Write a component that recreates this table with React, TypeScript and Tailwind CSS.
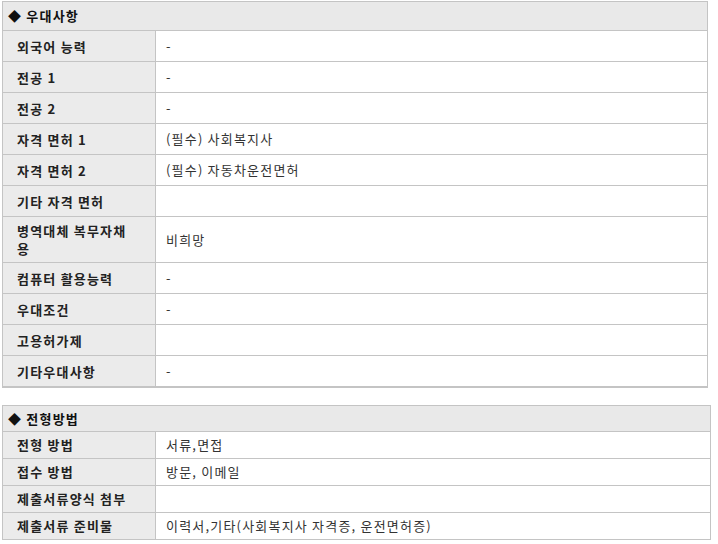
const FONT = "font-['Malgun_Gothic','Noto_Sans_CJK_KR',sans-serif]";

type Row = { label: string; value: string };

const PREFER: Row[] = [
  { label: "외국어 능력", value: "-" },
  { label: "전공 1", value: "-" },
  { label: "전공 2", value: "-" },
  { label: "자격 면허 1", value: "(필수) 사회복지사" },
  { label: "자격 면허 2", value: "(필수) 자동차운전면허" },
  { label: "기타 자격 면허", value: "" },
  { label: "병역대체 복무자채용", value: "비희망" },
  { label: "컴퓨터 활용능력", value: "-" },
  { label: "우대조건", value: "-" },
  { label: "고용허가제", value: "" },
  { label: "기타우대사항", value: "-" },
];

const SELECTION: Row[] = [
  { label: "전형 방법", value: "서류,면접" },
  { label: "접수 방법", value: "방문, 이메일" },
  { label: "제출서류양식 첨부", value: "" },
  { label: "제출서류 준비물", value: "이력서,기타(사회복지사 자격증, 운전면허증)" },
];

function InfoTable({
  title,
  rows,
  rowH,
  headH,
  pad,
  width,
  thickBottom,
}: {
  title: string;
  rows: Row[];
  rowH: string;
  headH: string;
  pad: string;
  width: string;
  thickBottom?: boolean;
}) {
  return (
    <div
      className={`${width} border border-[#c4c4c4] ${thickBottom ? "border-b-2" : ""} bg-white`}
    >
      <div
        className={`${headH} flex items-center pl-[5px] bg-[#e9e9e9] border-b border-[#c4c4c4] text-[13px] tracking-[1.2px] font-bold text-[#111]`}
      >
        ◆ {title}
      </div>
      {rows.map((r, i) => (
        <div
          key={r.label}
          className={`flex ${i < rows.length - 1 ? "border-b border-[#c4c4c4]" : ""}`}
        >
          <div
            className={`w-[153px] shrink-0 ${rowH} ${pad} flex items-center pl-[14px] pr-[20px] bg-[#ebebeb] border-r border-[#c4c4c4] text-[13px] tracking-[1.2px] leading-[18px] font-bold text-[#222]`}
          >
            {r.label}
          </div>
          <div className="flex-1 flex items-center pl-[10px] text-[13px] tracking-[1.2px] text-[#333]">
            {r.value}
          </div>
        </div>
      ))}
    </div>
  );
}

export default function App() {
  return (
    <div className={`${FONT} bg-white w-[718px] h-[544px] overflow-hidden pt-px pl-[2px]`}>
      <InfoTable
        title="우대사항"
        rows={PREFER}
        rowH="min-h-[30px]"
        headH="h-[29px]"
        pad="pt-[5px] pb-[4px]"
        width="w-[706px]"
        thickBottom
      />
      <div className="mt-[17px]">
        <InfoTable
          title="전형방법"
          rows={SELECTION}
          rowH="min-h-[26px]"
          headH="h-[26px]"
          pad="py-[4px]"
          width="w-[709px]"
        />
      </div>
    </div>
  );
}
